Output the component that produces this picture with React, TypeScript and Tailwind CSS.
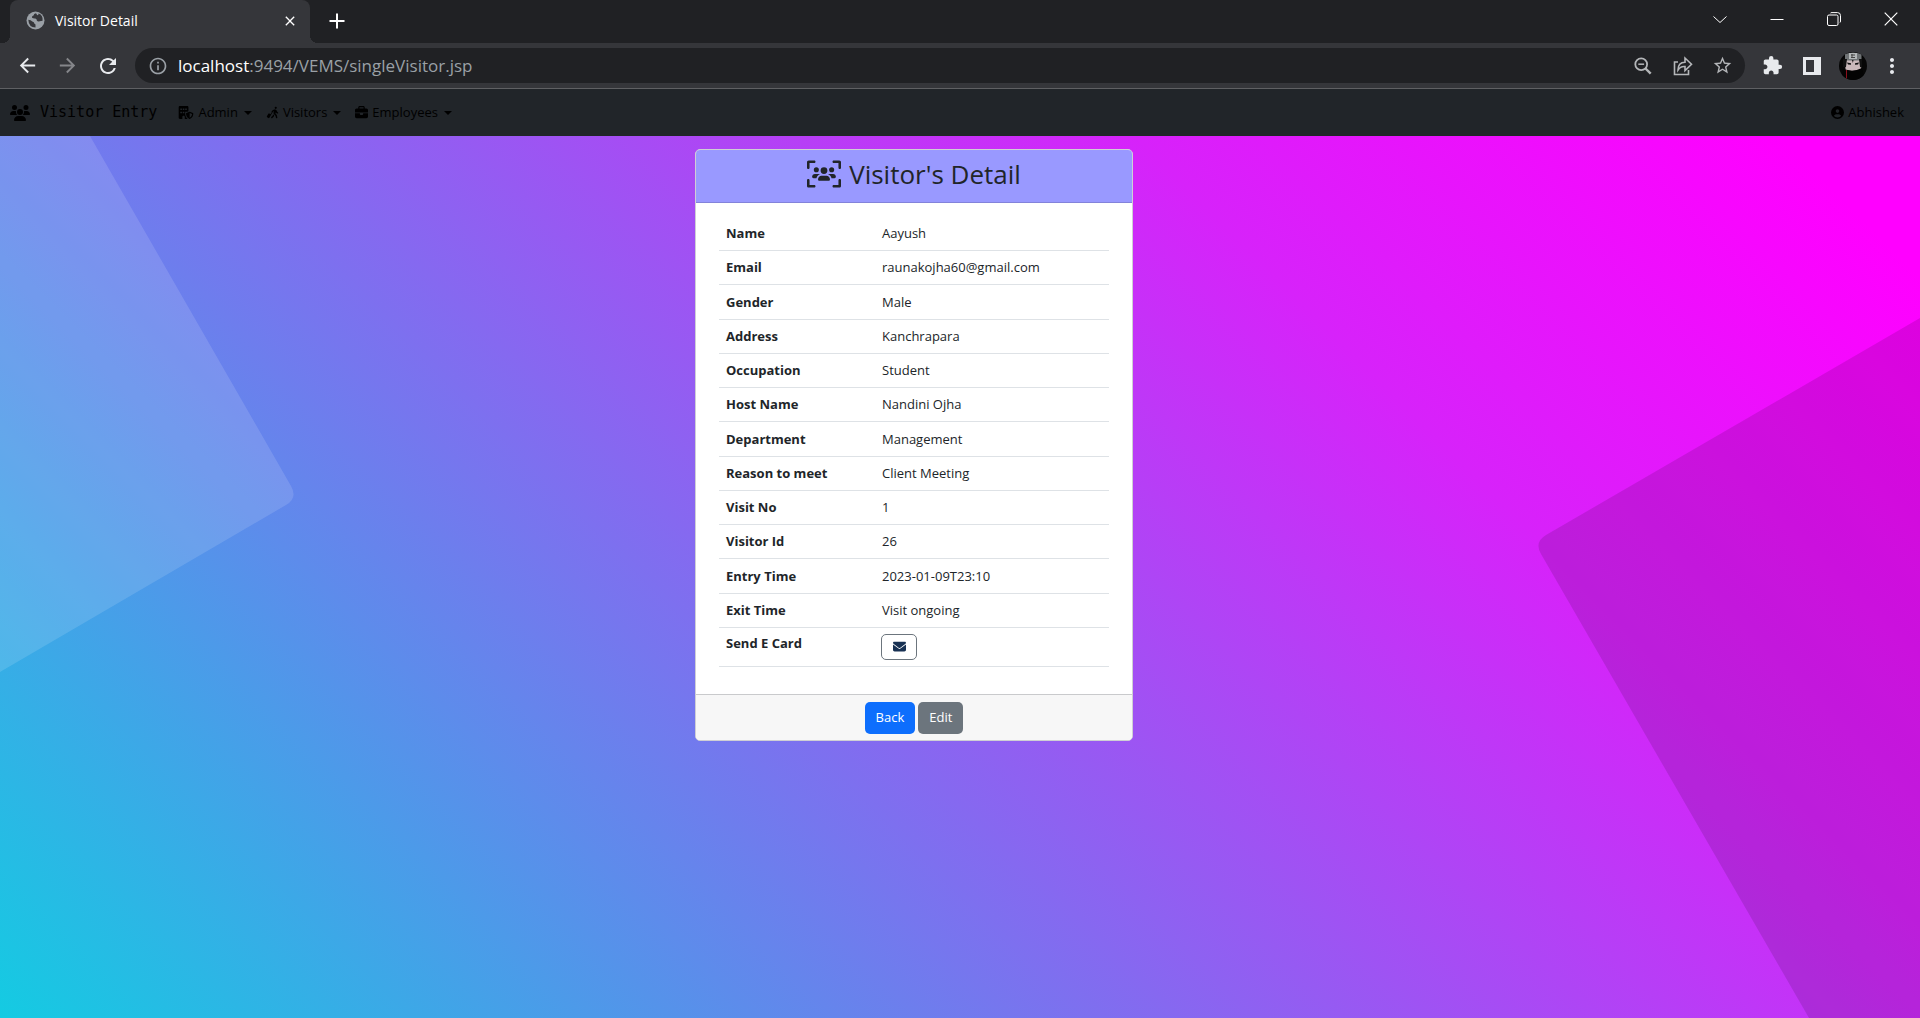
import { useState, type ReactNode } from "react";
import {
  FaBriefcase,
  FaBuildingShield,
  FaCircleUser,
  FaEnvelope,
  FaPersonWalkingLuggage,
  FaUsers,
  FaUsersViewfinder,
} from "react-icons/fa6";
import {
  MdArrowBack,
  MdArrowForward,
  MdClose,
  MdExtension,
  MdInfoOutline,
  MdMoreVert,
  MdRefresh,
  MdStarBorder,
} from "react-icons/md";

const details: [string, string][] = [
  ["Name", "Aayush"],
  ["Email", "raunakojha60@gmail.com"],
  ["Gender", "Male"],
  ["Address", "Kanchrapara"],
  ["Occupation", "Student"],
  ["Host Name", "Nandini Ojha"],
  ["Department", "Management"],
  ["Reason to meet", "Client Meeting"],
  ["Visit No", "1"],
  ["Visitor Id", "26"],
  ["Entry Time", "2023-01-09T23:10"],
  ["Exit Time", "Visit ongoing"],
];

function TabStrip() {
  return (
    <div className="flex h-[43px] items-stretch bg-[#202124] pl-2.5">
      <div className="relative flex w-[300px] items-center rounded-t-lg bg-[#35363a] pr-3 pb-0.5 pl-4">
        <span className="absolute bottom-0 -left-2 size-2 bg-[radial-gradient(circle_at_0_0,#202124_8px,#35363a_8px)]" />
        <span className="absolute -right-2 bottom-0 size-2 bg-[radial-gradient(circle_at_100%_0,#202124_8px,#35363a_8px)]" />
        <svg className="size-[19px]" viewBox="0 0 19 19">
          <circle cx="9.500" cy="9.500" r="9" fill="#9aa0a6" />
          <path
            fill="#35363a"
            d="M2.300 8.800q2.500 0 4 1.600 2 .4 2 2l1.200 1.200v3q-6.700 0-7.200-7.800zM10 2.200q-2.500.3-2.200 2-2.300.6-1.800 2.600 1.500 1 3.300.7 1.700.4 1.500 2.100 1 1.300 2.800.7l3-.5q.6-5.700-4-7.300 0 1.800-1.300 1.700z"
          />
        </svg>
        <span className="ml-2.5 flex-1 text-sm text-white">Visitor Detail</span>
        <button aria-label="Close tab" className="text-white">
          <MdClose className="size-4" />
        </button>
      </div>
      <button aria-label="New tab" className="ml-[15px] pb-0.5 text-white">
        <svg className="size-6" viewBox="0 0 24 24" fill="none" stroke="currentColor" strokeWidth="2">
          <path d="M12 4.500v15M4.500 12h15" />
        </svg>
      </button>
      <div className="ml-auto flex h-[38px] text-white">
        <button aria-label="Search tabs" className="flex w-[57px] items-center justify-center">
          <svg className="h-3.5 w-4" viewBox="0 0 16 14" fill="none" stroke="currentColor">
            <path d="M1.500 4.500 8 10.500l6.500-6" />
          </svg>
        </button>
        <button aria-label="Minimize" className="flex w-[57px] items-center justify-center">
          <svg className="size-3.5" viewBox="0 0 14 14" stroke="currentColor">
            <path d="M.5 7.500h13" />
          </svg>
        </button>
        <button aria-label="Restore" className="flex w-[57px] items-center justify-center">
          <svg className="size-3.5" viewBox="0 0 14 14" fill="none" stroke="currentColor">
            <rect x=".5" y="3" width="10.500" height="10.500" rx="1.500" />
            <path d="M3.500 1Q3.800.6 5 .6h5.500q3 0 3 3v5.400q0 1.200-.5 1.500" />
          </svg>
        </button>
        <button aria-label="Close" className="flex w-[58px] items-center justify-center">
          <svg className="size-3.5" viewBox="0 0 14 14" stroke="currentColor" strokeWidth="1.200">
            <path d="m.7.7 12.600 12.600M13.300.7.7 13.300" />
          </svg>
        </button>
      </div>
    </div>
  );
}

function Avatar() {
  return (
    <svg className="size-7" viewBox="0 0 28 28">
      <clipPath id="avatar">
        <circle cx="14" cy="14" r="14" />
      </clipPath>
      <g clipPath="url(#avatar)">
        <path fill="#060606" d="M0 0h28v28H0z" />
        <path fill="#c9b8ba" d="M6 8h16.500v8l-2 2.500-7 .5-7-1.500z" />
        <path fill="#6f7375" d="M6 2q8-3 16.500 0v6.500H6z" />
        <path fill="#b4b8b9" d="M10 1h8v6h-8z" />
        <path stroke="#444" fill="none" d="M12 3h4M12 5.500h4M13 2v4" />
        <path fill="#111" d="M4 7h4l-1 8H4zM20 7h3v9l-2-1zM8 10.500l4 .7v1.600l-3-.3zM20 10.500l-4 .7v1.600l3-.3zM13 8h1.500l-.6 3z" />
        <path fill="#030303" d="M4 17q9 4 19-1l3 12H2z" />
        <path stroke="#8d0f1c" d="M7.500 18v9" />
      </g>
    </svg>
  );
}

function Toolbar() {
  return (
    <div className="flex h-[46px] items-center border-b border-[#5f6063] bg-[#35363a] text-[#e8eaed]">
      <button aria-label="Back" className="ml-4">
        <MdArrowBack className="size-[23px]" />
      </button>
      <button aria-label="Forward" className="ml-[17px] text-[#85868a]">
        <MdArrowForward className="size-[23px]" />
      </button>
      <button aria-label="Reload" className="ml-[17px]">
        <MdRefresh className="size-6" />
      </button>
      <div className="ml-[15px] flex h-[35px] flex-1 items-center rounded-full bg-[#202124] px-3 text-[#b4b6b9]">
        <MdInfoOutline className="ml-px size-5 text-[#9aa0a6]" />
        <label className="relative ml-2.5 flex-1 text-[17px]">
          <span className="text-white">localhost</span>
          <span className="text-[#9aa0a6]">:9494/VEMS/singleVisitor.jsp</span>
          <input
            aria-label="Address"
            defaultValue="localhost:9494/VEMS/singleVisitor.jsp"
            className="absolute inset-0 w-full opacity-0"
          />
        </label>
        <button aria-label="Zoom">
          <svg className="size-[18px]" viewBox="0 0 18 18" fill="none" stroke="currentColor" strokeWidth="1.800">
            <circle cx="7.200" cy="7.200" r="5.900" />
            <path strokeWidth="2.400" d="m11.500 11.500 5.200 5.200" />
            <path strokeWidth="1.500" d="M4.300 7.200h5.800" />
          </svg>
        </button>
        <button aria-label="Share" className="ml-5">
          <svg className="size-[22px]" viewBox="0 0 22 22" fill="none" stroke="currentColor" strokeWidth="1.600">
            <path d="M6 7H2.500v12.500h14V15" />
            <path d="M6 15q0-7.500 7-7.700V3l6.500 6.200-6.500 6.300V11.500q-4.500-.5-7 3.500z" />
          </svg>
        </button>
        <button aria-label="Bookmark" className="ml-[18px]">
          <MdStarBorder className="size-[21px]" />
        </button>
      </div>
      <button aria-label="Extensions" className="ml-[17px]">
        <MdExtension className="size-[21px]" />
      </button>
      <button aria-label="Side panel" className="ml-5">
        <svg className="size-[18px]" viewBox="0 0 18 18" fill="currentColor" fillRule="evenodd">
          <path d="M0 0h18v18H0zM3 3v12h8V3z" />
        </svg>
      </button>
      <button aria-label="Profile" className="ml-[18px]">
        <Avatar />
      </button>
      <button aria-label="Menu" className="mr-4 ml-[13px]">
        <MdMoreVert className="size-6" />
      </button>
    </div>
  );
}

function NavMenu({ icon, children }: { icon: ReactNode; children: ReactNode }) {
  return (
    <button className="flex items-center gap-1">
      {icon}
      <span>{children}</span>
      <span className="ml-0.5 border-x-4 border-t-4 border-x-transparent border-t-black" />
    </button>
  );
}

function SiteNav() {
  return (
    <nav className="flex h-[47px] items-center bg-[#212529] px-2.5 text-[13px] text-black">
      <a href="#home" className="flex items-center gap-2.5 font-['DejaVu_Sans_Mono',monospace] text-[15px]">
        <FaUsers className="size-5" />
        Visitor Entry
      </a>
      <div className="ml-[21px] flex gap-3.5">
        <NavMenu icon={<FaBuildingShield className="h-[13px] w-4" />}>Admin</NavMenu>
        <NavMenu icon={<FaPersonWalkingLuggage className="size-[13px]" />}>Visitors</NavMenu>
        <NavMenu icon={<FaBriefcase className="size-[13px]" />}>Employees</NavMenu>
      </div>
      <a href="#account" className="ml-auto flex items-center gap-1 pr-1.5">
        <FaCircleUser className="size-[13px]" />
        Abhishek
      </a>
    </nav>
  );
}

function Backdrop() {
  return (
    <svg className="absolute inset-0 size-full" viewBox="0 0 1920 882" preserveAspectRatio="none">
      <path fill="#fff" fillOpacity=".13" d="M0 0h90l201 350q7 12-5 19L0 536z" />
      <path fill="#000" fillOpacity=".12" d="m1920 182-374 217q-12 7-5 19l268 464h111z" />
    </svg>
  );
}

function VisitorCard() {
  const [sent, setSent] = useState(false);
  return (
    <section className="relative w-[438px] overflow-hidden rounded-[5px] border border-[#cfcfd4] bg-white text-[13px] text-[#212529]">
      <header className="flex h-[53px] items-center justify-center gap-2 border-b border-[#8383da] bg-[#9999ff] pb-1">
        <FaUsersViewfinder className="h-7 w-[34px]" />
        <h1 className="text-[26px] leading-8 font-medium">Visitor's Detail</h1>
      </header>
      <div className="px-[23px] pt-3.5 pb-[27px]">
        <table className="h-[450px] w-full table-fixed border-collapse text-left">
          <tbody>
            {details.map(([name, value]) => (
              <tr key={name} className="border-b border-[#dee2e6]">
                <th scope="row" className="w-[40%] px-[7px] pt-px font-bold">
                  {name}
                </th>
                <td className="px-[7px] pt-px">{value}</td>
              </tr>
            ))}
            <tr className="h-[39px] border-b border-[#dee2e6] align-top">
              <th scope="row" className="px-[7px] pt-1.5 font-bold">
                Send E Card
              </th>
              <td className="px-1.5 pt-1.5">
                <button
                  aria-label="Send E Card"
                  aria-pressed={sent}
                  onClick={() => setSent(true)}
                  className="flex h-[26px] w-9 items-center justify-center rounded-[5px] border border-[#6c757d] pb-0.5 text-[#183153]"
                >
                  <FaEnvelope className="size-[13px]" />
                </button>
              </td>
            </tr>
          </tbody>
        </table>
      </div>
      <footer className="flex h-[46px] items-center justify-center gap-[3px] border-t border-[#c9cacc] bg-[#f7f7f7] text-white">
        <button className="h-8 rounded-[5px] bg-[#0d6efd] px-[11px]">Back</button>
        <button className="h-8 rounded-[5px] bg-[#6c757d] px-[11px]">Edit</button>
      </footer>
    </section>
  );
}

export default function App() {
  return (
    <div className="flex min-h-screen flex-col font-['Open_Sans','Noto_Sans',sans-serif]">
      <TabStrip />
      <Toolbar />
      <SiteNav />
      <main className="relative flex flex-1 items-start justify-center overflow-hidden bg-[linear-gradient(45deg,#14cbe2_0%,#d722fa_72%,#ff00ff_95%)] pt-[13px] pr-[92px]">
        <Backdrop />
        <VisitorCard />
      </main>
    </div>
  );
}
